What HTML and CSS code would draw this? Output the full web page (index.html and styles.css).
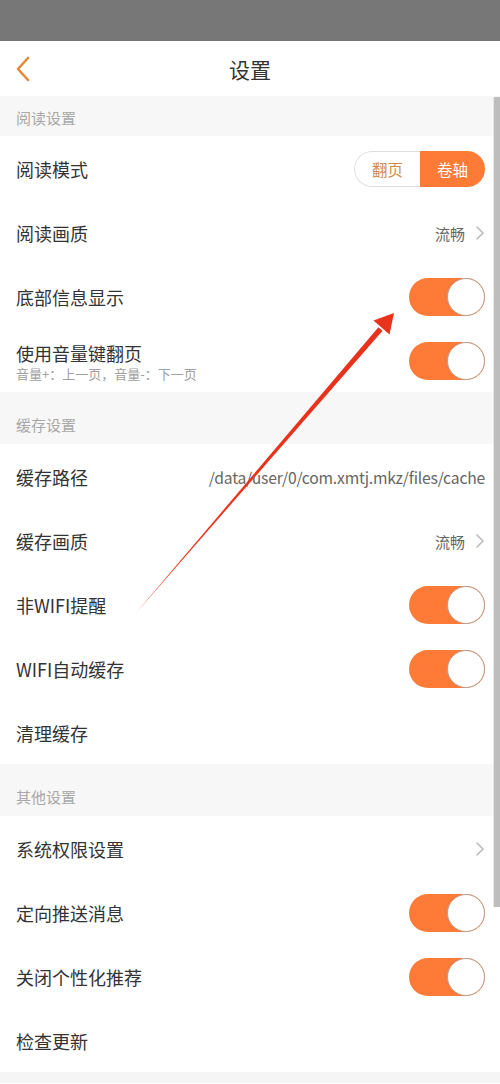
FILE: index.html
```html
<!DOCTYPE html>
<html lang="zh-CN">
<head>
<meta charset="utf-8">
<title>设置</title>
<link rel="stylesheet" href="styles.css">
</head>
<body>
<div class="screen">
  <div class="status"></div>
  <div class="nav">
    <div class="back">
      <svg width="18" height="28" viewBox="0 0 18 28"><path d="M14 3 L4 14 L14 25" fill="none" stroke="#e7893a" stroke-width="2.6" stroke-linecap="round" stroke-linejoin="round"/></svg>
    </div>
    <div class="title">设置</div>
    <div class="nav-side"></div>
  </div>

  <div class="content">
    <div class="head head-first">阅读设置</div>
    <div class="row">
      <span class="label">阅读模式</span>
      <div class="seg"><span class="seg-off">翻页</span><span class="seg-on">卷轴</span></div>
    </div>
    <div class="row">
      <span class="label">阅读画质</span>
      <span class="value">流畅<svg class="chev" width="10" height="16" viewBox="0 0 10 16"><path d="M2 2 L8 8 L2 14" fill="none" stroke="#bbb" stroke-width="1.6" stroke-linecap="round" stroke-linejoin="round"/></svg></span>
    </div>
    <div class="row">
      <span class="label">底部信息显示</span>
      <span class="toggle"><span class="knob"></span></span>
    </div>
    <div class="row">
      <div class="label-group">
        <span class="label">使用音量键翻页</span>
        <span class="sub">音量+：上一页，音量-：下一页</span>
      </div>
      <span class="toggle"><span class="knob"></span></span>
    </div>

    <div class="head">缓存设置</div>
    <div class="row">
      <span class="label">缓存路径</span>
      <span class="path">/data/user/0/com.xmtj.mkz/files/cache</span>
    </div>
    <div class="row">
      <span class="label">缓存画质</span>
      <span class="value">流畅<svg class="chev" width="10" height="16" viewBox="0 0 10 16"><path d="M2 2 L8 8 L2 14" fill="none" stroke="#bbb" stroke-width="1.6" stroke-linecap="round" stroke-linejoin="round"/></svg></span>
    </div>
    <div class="row">
      <span class="label">非WIFI提醒</span>
      <span class="toggle"><span class="knob"></span></span>
    </div>
    <div class="row">
      <span class="label">WIFI自动缓存</span>
      <span class="toggle"><span class="knob"></span></span>
    </div>
    <div class="row">
      <span class="label">清理缓存</span>
    </div>

    <div class="head">其他设置</div>
    <div class="row">
      <span class="label">系统权限设置</span>
      <span class="value"><svg class="chev" width="10" height="16" viewBox="0 0 10 16"><path d="M2 2 L8 8 L2 14" fill="none" stroke="#bbb" stroke-width="1.6" stroke-linecap="round" stroke-linejoin="round"/></svg></span>
    </div>
    <div class="row">
      <span class="label">定向推送消息</span>
      <span class="toggle"><span class="knob"></span></span>
    </div>
    <div class="row">
      <span class="label">关闭个性化推荐</span>
      <span class="toggle"><span class="knob"></span></span>
    </div>
    <div class="row">
      <span class="label">检查更新</span>
    </div>
    <div class="foot"></div>
  </div>

  <div class="scrollbar"></div>

  <svg class="arrow" width="500" height="1084" viewBox="0 0 500 1084">
    <polygon points="136,613 382.6,330.8 378.4,327.2" fill="#e8321c"/>
    <polygon points="394,313 389.5,334.5 373.5,320.5" fill="#e8321c"/>
  </svg>
</div>
</body>
</html>
```

FILE: styles.css
```css
html, body {
  margin: 0;
  padding: 0;
}
body {
  width: 500px;
  height: 1084px;
  overflow: hidden;
  background: #ffffff;
  font-family: "Noto Sans CJK SC", "Noto Sans", sans-serif;
  color: #333333;
}
.screen {
  position: relative;
  width: 500px;
  height: 1084px;
  overflow: hidden;
}
.status {
  height: 41px;
  background: #777777;
}
.nav {
  height: 55px;
  display: grid;
  grid-template-columns: 60px 1fr 60px;
  align-items: center;
  background: #ffffff;
}
.back {
  display: flex;
  align-items: center;
  padding-left: 14px;
  height: 55px;
}
.back svg {
  display: block;
}
.title {
  text-align: center;
  font-size: 21px;
  color: #333333;
  line-height: 30px;
}
.content {
  display: flex;
  flex-direction: column;
}
.head {
  background: #f7f7f7;
  color: #a8a8a8;
  font-size: 15px;
  line-height: 20px;
  height: 52px;
  box-sizing: border-box;
  padding: 23px 16px 9px;
}
.head-first {
  height: 40px;
  padding: 12px 16px 8px;
}
.row {
  height: 64px;
  box-sizing: border-box;
  display: flex;
  align-items: center;
  justify-content: space-between;
  padding: 2px 15px 0 16px;
  background: #ffffff;
}
.label {
  font-size: 18px;
  color: #333333;
  line-height: 24px;
  white-space: nowrap;
}
.label-group {
  display: flex;
  flex-direction: column;
  padding-top: 1px;
}
.sub {
  font-size: 13px;
  color: #a0a0a0;
  line-height: 18px;
  margin-top: 0;
}
.value {
  display: flex;
  align-items: center;
  gap: 10px;
  font-size: 15px;
  color: #666666;
}
.chev {
  display: block;
}
.path {
  font-size: 15.7px;
  color: #666666;
  white-space: nowrap;
  letter-spacing: -0.2px;
}
.toggle {
  width: 76px;
  height: 38px;
  border-radius: 19px;
  background: #fd7a37;
  position: relative;
  box-sizing: border-box;
  flex: none;
}
.knob {
  position: absolute;
  right: 0;
  top: 0;
  width: 38px;
  height: 38px;
  box-sizing: border-box;
  border-radius: 50%;
  background: #ffffff;
  border: 1.5px solid #b9a08e;
}
.seg {
  display: flex;
  width: 131px;
  height: 36px;
  border-radius: 18px;
  overflow: hidden;
  box-sizing: border-box;
  flex: none;
}
.seg-off, .seg-on {
  flex: 1;
  display: flex;
  align-items: center;
  justify-content: center;
  font-size: 15.5px;
}
.seg-off {
  border: 1.5px solid #dddddd;
  border-right: none;
  border-radius: 18px 0 0 18px;
  color: #d08a50;
  background: #ffffff;
}
.seg-on {
  background: #fd7a37;
  color: #ffffff;
}
.foot {
  height: 11px;
  background: #f5f5f5;
}
.scrollbar {
  position: absolute;
  right: 0;
  top: 97px;
  width: 6px;
  height: 810px;
  background: #bdbdbd;
  border-left: 1px solid #e6e6e6;
}
.arrow {
  position: absolute;
  left: 0;
  top: 0;
  pointer-events: none;
}
```
